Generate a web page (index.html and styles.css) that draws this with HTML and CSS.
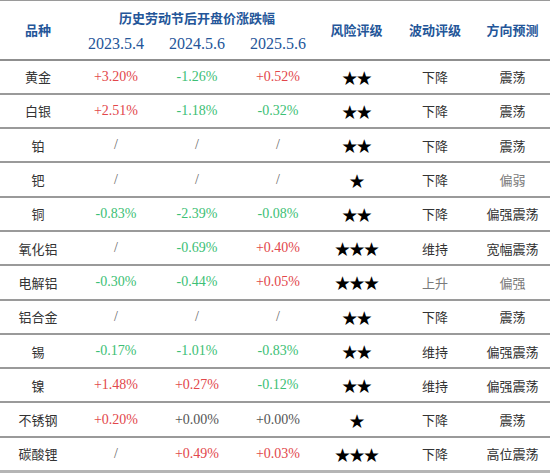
FILE: index.html
```html
<!DOCTYPE html>
<html lang="zh-CN">
<head>
<meta charset="utf-8">
<link rel="stylesheet" href="styles.css">
</head>
<body>
<table class="tbl">
  <colgroup>
    <col class="c1"><col class="c2"><col class="c3"><col class="c4"><col class="c5"><col class="c6"><col class="c7">
  </colgroup>
  <thead>
    <tr class="h1">
      <th rowspan="2" class="hz">品种</th>
      <th colspan="3" class="hz grp">历史劳动节后开盘价涨跌幅</th>
      <th rowspan="2" class="hz">风险评级</th>
      <th rowspan="2" class="hz">波动评级</th>
      <th rowspan="2" class="hz">方向预测</th>
    </tr>
    <tr class="h2">
      <th class="date">2023.5.4</th>
      <th class="date">2024.5.6</th>
      <th class="date">2025.5.6</th>
    </tr>
  </thead>
  <tbody>
    <tr><td class="name">黄金</td><td class="num up">+3.20%</td><td class="num dn">-1.26%</td><td class="num up">+0.52%</td><td class="star">★★</td><td class="txt">下降</td><td class="txt">震荡</td></tr>
    <tr><td class="name">白银</td><td class="num up">+2.51%</td><td class="num dn">-1.18%</td><td class="num dn">-0.32%</td><td class="star">★★</td><td class="txt">下降</td><td class="txt">震荡</td></tr>
    <tr><td class="name">铂</td><td class="num na">/</td><td class="num na">/</td><td class="num na">/</td><td class="star">★★</td><td class="txt">下降</td><td class="txt">震荡</td></tr>
    <tr><td class="name">钯</td><td class="num na">/</td><td class="num na">/</td><td class="num na">/</td><td class="star">★</td><td class="txt">下降</td><td class="txt light">偏弱</td></tr>
    <tr><td class="name">铜</td><td class="num dn">-0.83%</td><td class="num dn">-2.39%</td><td class="num dn">-0.08%</td><td class="star">★★</td><td class="txt">下降</td><td class="txt">偏强震荡</td></tr>
    <tr><td class="name">氧化铝</td><td class="num na">/</td><td class="num dn">-0.69%</td><td class="num up">+0.40%</td><td class="star">★★★</td><td class="txt">维持</td><td class="txt">宽幅震荡</td></tr>
    <tr><td class="name">电解铝</td><td class="num dn">-0.30%</td><td class="num dn">-0.44%</td><td class="num up">+0.05%</td><td class="star">★★★</td><td class="txt light">上升</td><td class="txt light">偏强</td></tr>
    <tr><td class="name">铝合金</td><td class="num na">/</td><td class="num na">/</td><td class="num na">/</td><td class="star">★★</td><td class="txt">下降</td><td class="txt">震荡</td></tr>
    <tr><td class="name">锡</td><td class="num dn">-0.17%</td><td class="num dn">-1.01%</td><td class="num dn">-0.83%</td><td class="star">★★</td><td class="txt">维持</td><td class="txt">偏强震荡</td></tr>
    <tr><td class="name">镍</td><td class="num up">+1.48%</td><td class="num up">+0.27%</td><td class="num dn">-0.12%</td><td class="star">★★</td><td class="txt">维持</td><td class="txt">偏强震荡</td></tr>
    <tr><td class="name">不锈钢</td><td class="num up">+0.20%</td><td class="num zero">+0.00%</td><td class="num zero">+0.00%</td><td class="star">★</td><td class="txt">下降</td><td class="txt">震荡</td></tr>
    <tr class="last"><td class="name">碳酸锂</td><td class="num na">/</td><td class="num up">+0.49%</td><td class="num up">+0.03%</td><td class="star">★★★</td><td class="txt">下降</td><td class="txt">高位震荡</td></tr>
  </tbody>
</table>
</body>
</html>
```

FILE: styles.css
```css
html, body {
  margin: 0;
  padding: 0;
  background: #ffffff;
}

.tbl {
  width: 550px;
  border-collapse: collapse;
  table-layout: fixed;
  border-top: 1px solid #9a9a9a;
}

.c1 { width: 76px; }
.c2 { width: 80px; }
.c3 { width: 82px; }
.c4 { width: 80px; }
.c5 { width: 77px; }
.c6 { width: 80px; }
.c7 { width: 75px; }

th, td {
  padding: 0;
  text-align: center;
  vertical-align: middle;
}

thead th {
  color: #245699;
  font-weight: 700;
}

.hz {
  font-family: "Noto Sans CJK SC", sans-serif;
  font-size: 13px;
  font-weight: 600;
  border-bottom: 2px solid #8f8f8f;
}

.h1 { height: 32px; }
.h2 { height: 27px; }

.grp {
  border-bottom: none;
  padding-top: 2px;
}

.date {
  font-family: "Liberation Serif", serif;
  font-size: 16px;
  font-weight: 400;
  border-bottom: 2px solid #8f8f8f;
  padding-bottom: 4px;
}

tbody tr {
  height: 34.3px;
}

tbody td {
  border-bottom: 2px solid #9a9a9a;
}

tbody tr.last td {
  border-bottom: 3px solid #b5b5b5;
}

.name, .txt {
  font-family: "Noto Sans CJK SC", sans-serif;
  font-size: 13px;
  color: #333333;
}

.light { color: #7a7a7a; }

.num {
  font-family: "Liberation Serif", serif;
  font-size: 14px;
}

.up { color: #e2474b; }
.dn { color: #3cc075; }
.zero { color: #555555; }
.na { color: #666666; }

.star {
  font-family: "Noto Sans CJK SC", sans-serif;
  font-size: 15.5px;
  color: #000000;
  letter-spacing: -1px;
}
```
